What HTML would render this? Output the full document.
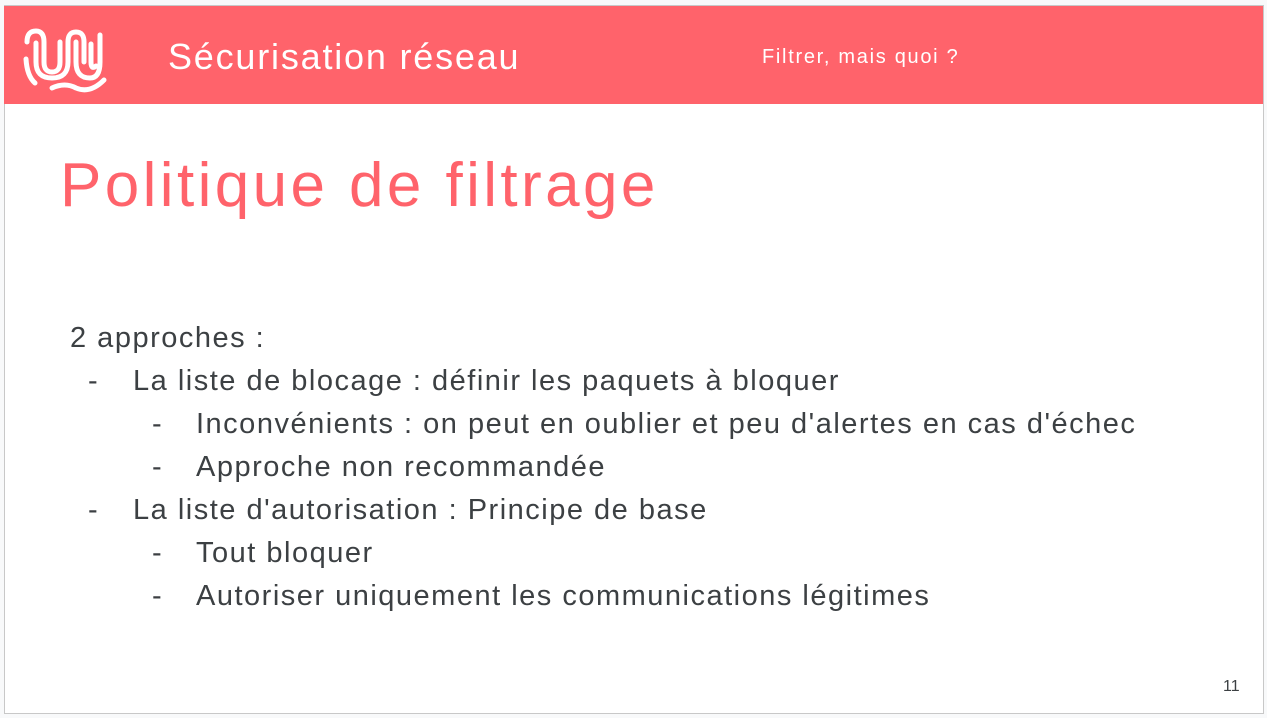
<!DOCTYPE html>
<html><head><meta charset="utf-8"><style>
body{margin:0;width:1267px;height:718px;background:#f8f9fa;position:relative;overflow:hidden;font-family:"Liberation Sans",sans-serif}
.slide{position:absolute;left:4px;top:5px;width:1258px;height:707px;background:#fff;border:1px solid #c8c8c8}
.hdr{position:absolute;left:4px;top:6px;width:1259px;height:98px;background:#ff636b}
.t{position:absolute;white-space:nowrap}
.b{color:#3c4043;font-size:29px;letter-spacing:1.5px}
</style></head><body>
<div class="slide"></div>
<div class="hdr"></div>
<svg style="position:absolute;left:0;top:0" width="130" height="105" viewBox="0 0 130 105">
<g fill="none" stroke="#fff" stroke-width="5" stroke-linecap="round">
<path d="M26,59 Q27,76 35,83"/>
<path d="M27,42 Q27,31 36,31 Q44,31 44,42 V62 Q44,72 52,72 Q60,72 60,62 V42"/>
<path d="M36,43 V62 Q36,78 52,78 Q68,78 68,62 V42 Q68,32 76,32 Q84,32 84,42 V62"/>
<path d="M76,42 V62 Q76,78 90,78 Q100,78 100,62 V35"/>
<path d="M91,44 V62 Q91,70 96,66"/>
<path d="M52,88 Q65,82 76,88 Q90,94 104,80"/>
</g></svg>
<div class="t" style="left:168px;top:36px;font-size:36px;color:#fff;letter-spacing:1.8px">Sécurisation réseau</div>
<div class="t" style="left:762px;top:46px;font-size:20px;color:#fff;letter-spacing:1.7px">Filtrer, mais quoi ?</div>
<div class="t" style="left:60px;top:150px;font-size:62px;color:#ff636b;letter-spacing:3.4px">Politique de filtrage</div>
<div class="t b" style="left:70px;top:322px">2 approches :</div>
<div class="t b" style="left:88px;top:365px">-</div><div class="t b" style="left:133px;top:365px">La liste de blocage : définir les paquets à bloquer</div>
<div class="t b" style="left:152px;top:408px">-</div><div class="t b" style="left:196px;top:408px">Inconvénients : on peut en oublier et peu d'alertes en cas d'échec</div>
<div class="t b" style="left:152px;top:451px">-</div><div class="t b" style="left:196px;top:451px">Approche non recommandée</div>
<div class="t b" style="left:88px;top:494px">-</div><div class="t b" style="left:133px;top:494px">La liste d'autorisation : Principe de base</div>
<div class="t b" style="left:152px;top:537px">-</div><div class="t b" style="left:196px;top:537px">Tout bloquer</div>
<div class="t b" style="left:152px;top:580px">-</div><div class="t b" style="left:196px;top:580px">Autoriser uniquement les communications légitimes</div>
<div class="t" style="left:1223px;top:678px;font-size:16px;color:#3c4043">11</div>
</body></html>
